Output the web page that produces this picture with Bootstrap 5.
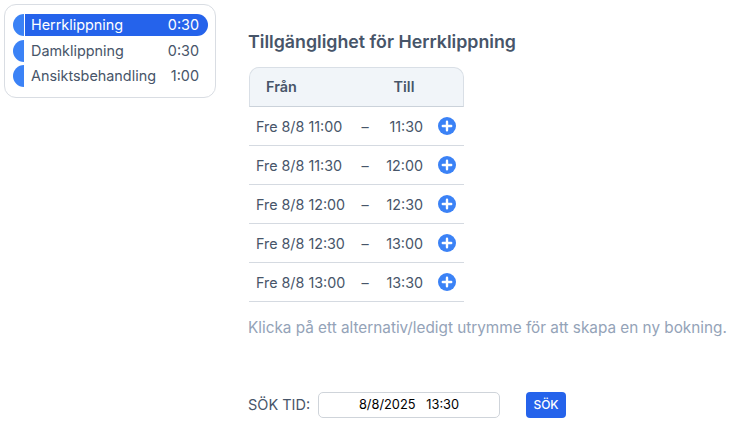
<!DOCTYPE html>
<html lang="sv">
<head>
<meta charset="utf-8">
<title>Tillgänglighet</title>
<link rel="stylesheet" href="https://cdn.jsdelivr.net/npm/bootstrap@5.3.0/dist/css/bootstrap.min.css">
<style>
html,body{height:100%;overflow:hidden}
body{font-family:Inter,"Liberation Sans",sans-serif;color:#475569;font-size:14.4px;background:#fff}
.page-wrap{padding:4px 0 0 4px}
.svc-card{width:212px;height:94px;border:1px solid #d9dde3;border-radius:12px;padding:9px 7px 0 8px;flex:none}
.svc-row{height:22px;margin-bottom:3.6px;line-height:22px}
.svc-cap{width:11px;height:22px;background:#3b82f6;border-radius:11px 0 0 11px;flex:none}
.svc-body{margin-left:1px;flex:1;padding:0 9px 0 6px;border-radius:0 11px 11px 0;white-space:nowrap}
.svc-on{background:#2563eb;color:#fff}
.main-col{margin-left:32px;width:490px;flex:none}
.main-title{font-size:17.8px;font-weight:600;line-height:20px;margin:28px 0 15px;color:#475569}
.slot-tbl{width:215px;margin-left:1px}
.slot-head{height:40px;background:#f1f5f9;border:1px solid #d9dfe6;border-bottom:1px solid #cbd2da;border-radius:10px 10px 0 0;font-weight:600;font-size:14.4px}
.head-a{width:95px;padding-left:16px}
.head-b{width:64px;text-align:center;margin-left:27px}
.slot-row{height:39px;border-bottom:1px solid #d5dae1;font-size:14.3px}
.c-from,.c-dash,.c-to{padding-top:2px}
.c-from{width:97px;padding-left:7px;white-space:nowrap}
.c-dash{width:38px;text-align:center}
.c-to{width:39px;text-align:right}
.c-add{margin-left:15px;line-height:0}
.hint-txt{color:#94a3b8;font-size:15.3px;line-height:20px;margin:16px 0 0;white-space:nowrap}
.find-row{margin-top:54px;height:26px}
.find-lbl{font-size:14.5px;width:70px;white-space:nowrap}
.find-input{width:182px;height:26px;border:1px solid #cfd4da;border-radius:5px;font-size:12.8px;color:#000;text-align:center;line-height:24px;white-space:pre}
.find-btn{margin-left:26px;width:40px;height:26px;padding:0;background:#2563eb;border:0;border-radius:4px;color:#fff;font-size:12px;font-weight:500}
</style>
</head>
<body>
<div class="page-wrap d-flex">
  <div class="svc-card bg-white">
    <div class="svc-row d-flex"><span class="svc-cap"></span><div class="svc-body svc-on d-flex justify-content-between"><span>Herrklippning</span><span>0:30</span></div></div>
    <div class="svc-row d-flex"><span class="svc-cap"></span><div class="svc-body d-flex justify-content-between"><span>Damklippning</span><span>0:30</span></div></div>
    <div class="svc-row d-flex"><span class="svc-cap"></span><div class="svc-body d-flex justify-content-between"><span>Ansiktsbehandling</span><span>1:00</span></div></div>
  </div>
  <div class="main-col">
    <h2 class="main-title">Tillgänglighet för Herrklippning</h2>
    <div class="slot-tbl">
      <div class="slot-head d-flex align-items-center"><span class="head-a">Från</span><span class="head-b">Till</span></div>
      <div class="slot-row d-flex align-items-center"><span class="c-from">Fre 8/8 11:00</span><span class="c-dash">–</span><span class="c-to">11:30</span><span class="c-add"><svg width="18" height="18" viewBox="0 0 18 18"><circle cx="9" cy="9" r="9" fill="#3b82f6"/><path d="M9 4.8v8.4M4.8 9h8.4" stroke="#fff" stroke-width="2.4" stroke-linecap="round"/></svg></span></div>
      <div class="slot-row d-flex align-items-center"><span class="c-from">Fre 8/8 11:30</span><span class="c-dash">–</span><span class="c-to">12:00</span><span class="c-add"><svg width="18" height="18" viewBox="0 0 18 18"><circle cx="9" cy="9" r="9" fill="#3b82f6"/><path d="M9 4.8v8.4M4.8 9h8.4" stroke="#fff" stroke-width="2.4" stroke-linecap="round"/></svg></span></div>
      <div class="slot-row d-flex align-items-center"><span class="c-from">Fre 8/8 12:00</span><span class="c-dash">–</span><span class="c-to">12:30</span><span class="c-add"><svg width="18" height="18" viewBox="0 0 18 18"><circle cx="9" cy="9" r="9" fill="#3b82f6"/><path d="M9 4.8v8.4M4.8 9h8.4" stroke="#fff" stroke-width="2.4" stroke-linecap="round"/></svg></span></div>
      <div class="slot-row d-flex align-items-center"><span class="c-from">Fre 8/8 12:30</span><span class="c-dash">–</span><span class="c-to">13:00</span><span class="c-add"><svg width="18" height="18" viewBox="0 0 18 18"><circle cx="9" cy="9" r="9" fill="#3b82f6"/><path d="M9 4.8v8.4M4.8 9h8.4" stroke="#fff" stroke-width="2.4" stroke-linecap="round"/></svg></span></div>
      <div class="slot-row d-flex align-items-center"><span class="c-from">Fre 8/8 13:00</span><span class="c-dash">–</span><span class="c-to">13:30</span><span class="c-add"><svg width="18" height="18" viewBox="0 0 18 18"><circle cx="9" cy="9" r="9" fill="#3b82f6"/><path d="M9 4.8v8.4M4.8 9h8.4" stroke="#fff" stroke-width="2.4" stroke-linecap="round"/></svg></span></div>
    </div>
    <p class="hint-txt">Klicka på ett alternativ/ledigt utrymme för att skapa en ny bokning.</p>
    <div class="find-row d-flex align-items-center">
      <span class="find-lbl">SÖK TID:</span>
      <div class="find-input bg-white">8/8/2025   13:30</div>
      <button type="button" class="btn find-btn">SÖK</button>
    </div>
  </div>
</div>
</body>
</html>
